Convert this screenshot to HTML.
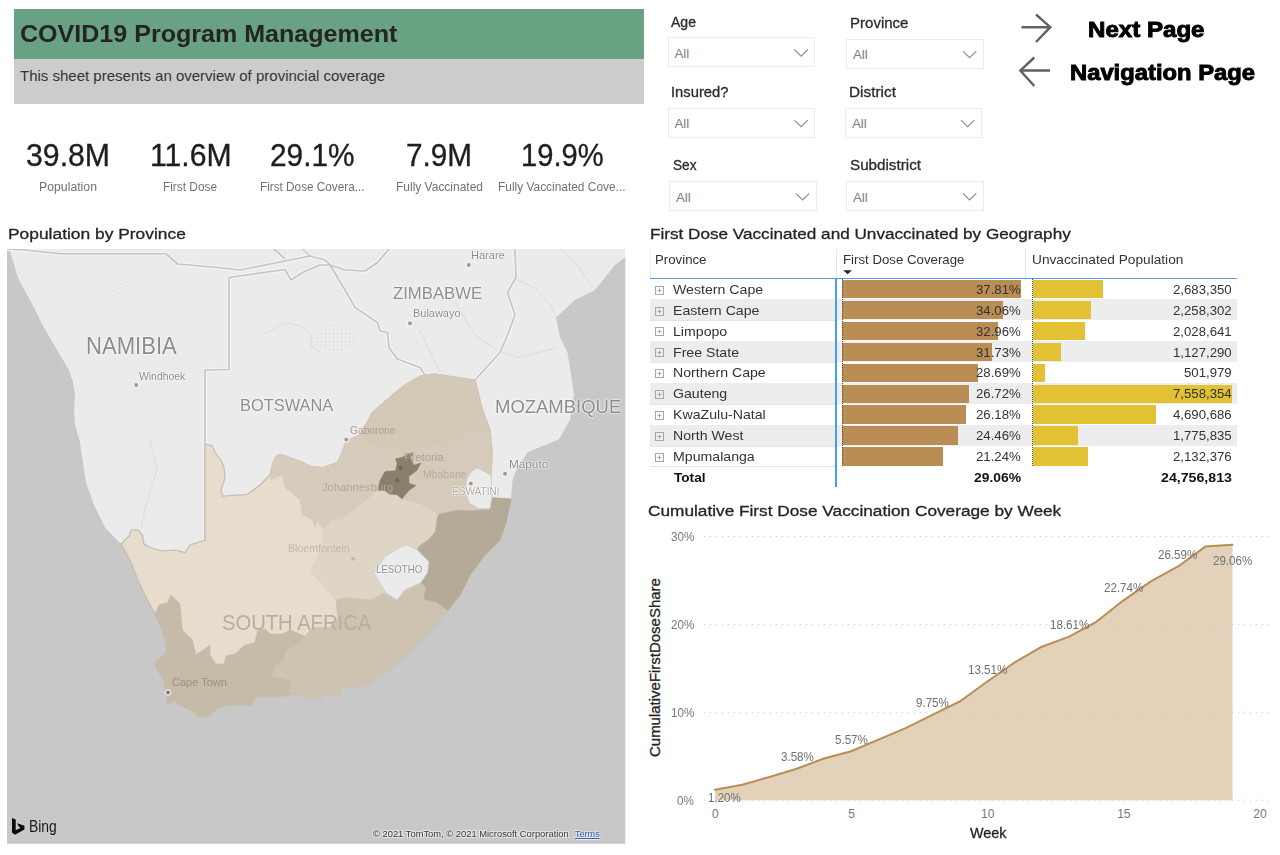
<!DOCTYPE html>
<html><head><meta charset="utf-8"><title>COVID19 Program Management</title>
<style>
html,body{margin:0;padding:0;background:#fff;}
body{width:1280px;height:855px;position:relative;overflow:hidden;font-family:"Liberation Sans",sans-serif;}
.t{position:absolute;white-space:nowrap;line-height:1;display:block;transform-origin:0 0;}
.r{position:absolute;}
svg{position:absolute;left:0;top:0;}
.halo{text-shadow:0 0 2px #fff,0 0 2px #fff,0 0 1px #fff;}
</style></head><body>

<div class="r" style="left:14px;top:9px;width:630px;height:50px;background:#68a283;"></div>
<div class="r" style="left:14px;top:59px;width:630px;height:45.4px;background:#cccccc;"></div>
<span class="t " style="left:20.00px;top:21.60px;font-size:24.6px;color:#252423;font-weight:700;transform:scaleX(1.0190);">COVID19 Program Management</span>
<span class="t " style="left:20.00px;top:68.40px;font-size:15px;color:#333;">This sheet presents an overview of provincial coverage</span>
<span class="t " style="left:26.15px;top:140.30px;font-size:31.2px;color:#1f1e1d;transform:scaleX(0.9698);-webkit-text-stroke:0.35px #1f1e1d;">39.8M</span>
<span class="t " style="left:39.00px;top:181.40px;font-size:12px;color:#727272;transform:scaleX(1.0227);">Population</span>
<span class="t " style="left:149.70px;top:140.30px;font-size:31.2px;color:#1f1e1d;transform:scaleX(0.9668);-webkit-text-stroke:0.35px #1f1e1d;">11.6M</span>
<span class="t " style="left:163.00px;top:181.40px;font-size:12px;color:#727272;transform:scaleX(0.9877);">First Dose</span>
<span class="t " style="left:269.70px;top:140.30px;font-size:31.2px;color:#1f1e1d;transform:scaleX(0.9563);-webkit-text-stroke:0.35px #1f1e1d;">29.1%</span>
<span class="t " style="left:259.95px;top:181.40px;font-size:12px;color:#727272;transform:scaleX(0.9794);">First Dose Covera...</span>
<span class="t " style="left:406.15px;top:140.30px;font-size:31.2px;color:#1f1e1d;transform:scaleX(0.9529);-webkit-text-stroke:0.35px #1f1e1d;">7.9M</span>
<span class="t " style="left:395.50px;top:181.40px;font-size:12px;color:#727272;transform:scaleX(0.9982);">Fully Vaccinated</span>
<span class="t " style="left:521.20px;top:140.30px;font-size:31.2px;color:#1f1e1d;transform:scaleX(0.9337);-webkit-text-stroke:0.35px #1f1e1d;">19.9%</span>
<span class="t " style="left:498.05px;top:181.40px;font-size:12px;color:#727272;transform:scaleX(0.9922);">Fully Vaccinated Cove...</span>
<span class="t " style="left:671.00px;top:14.95px;font-size:14.9px;color:#2b2b2b;transform:scaleX(0.9429);-webkit-text-stroke:0.3px #2b2b2b;">Age</span>
<div class="r" style="left:667.5px;top:37.2px;width:145.5px;height:28px;border:1px solid #ececec;background:#fff;"></div>
<span class="t " style="left:674.50px;top:47.25px;font-size:13.3px;color:#7d7d7d;">All</span>
<svg width="1280" height="855" style="pointer-events:none"><path d="M794.4,49.50000000000001 L801.1,56.2 L807.8000000000001,49.50000000000001" fill="none" stroke="#8a8a8a" stroke-width="1.1"/></svg>
<span class="t " style="left:671.00px;top:84.95px;font-size:14.9px;color:#2b2b2b;transform:scaleX(0.9916);-webkit-text-stroke:0.3px #2b2b2b;">Insured?</span>
<div class="r" style="left:667.5px;top:107.5px;width:145.5px;height:28.5px;border:1px solid #ececec;background:#fff;"></div>
<span class="t " style="left:674.50px;top:117.25px;font-size:13.3px;color:#7d7d7d;">All</span>
<svg width="1280" height="855" style="pointer-events:none"><path d="M794.4,120.05 L801.1,126.75 L807.8000000000001,120.05" fill="none" stroke="#8a8a8a" stroke-width="1.1"/></svg>
<span class="t " style="left:673.00px;top:157.95px;font-size:14.9px;color:#2b2b2b;transform:scaleX(0.9153);-webkit-text-stroke:0.3px #2b2b2b;">Sex</span>
<div class="r" style="left:669px;top:181px;width:145.5px;height:28px;border:1px solid #ececec;background:#fff;"></div>
<span class="t " style="left:676.00px;top:191.25px;font-size:13.3px;color:#7d7d7d;">All</span>
<svg width="1280" height="855" style="pointer-events:none"><path d="M795.9,193.29999999999998 L802.6,200.0 L809.3000000000001,193.29999999999998" fill="none" stroke="#8a8a8a" stroke-width="1.1"/></svg>
<span class="t " style="left:849.50px;top:15.95px;font-size:14.9px;color:#2b2b2b;transform:scaleX(1.0091);-webkit-text-stroke:0.3px #2b2b2b;">Province</span>
<div class="r" style="left:846px;top:39px;width:135.5px;height:27.5px;border:1px solid #ececec;background:#fff;"></div>
<span class="t " style="left:853.00px;top:48.25px;font-size:13.3px;color:#7d7d7d;">All</span>
<svg width="1280" height="855" style="pointer-events:none"><path d="M962.9,51.050000000000004 L969.6,57.75 L976.3000000000001,51.050000000000004" fill="none" stroke="#8a8a8a" stroke-width="1.1"/></svg>
<span class="t " style="left:849.00px;top:84.95px;font-size:14.9px;color:#2b2b2b;transform:scaleX(1.0324);-webkit-text-stroke:0.3px #2b2b2b;">District</span>
<div class="r" style="left:845px;top:107.5px;width:134.5px;height:28.5px;border:1px solid #ececec;background:#fff;"></div>
<span class="t " style="left:852.00px;top:117.25px;font-size:13.3px;color:#7d7d7d;">All</span>
<svg width="1280" height="855" style="pointer-events:none"><path d="M960.9,120.05 L967.6,126.75 L974.3000000000001,120.05" fill="none" stroke="#8a8a8a" stroke-width="1.1"/></svg>
<span class="t " style="left:850.00px;top:157.95px;font-size:14.9px;color:#2b2b2b;transform:scaleX(1.0207);-webkit-text-stroke:0.3px #2b2b2b;">Subdistrict</span>
<div class="r" style="left:846px;top:181px;width:135.5px;height:28px;border:1px solid #ececec;background:#fff;"></div>
<span class="t " style="left:853.00px;top:191.25px;font-size:13.3px;color:#7d7d7d;">All</span>
<svg width="1280" height="855" style="pointer-events:none"><path d="M962.9,193.29999999999998 L969.6,200.0 L976.3000000000001,193.29999999999998" fill="none" stroke="#8a8a8a" stroke-width="1.1"/></svg>
<svg width="1280" height="855"><g fill="none" stroke="#646260" stroke-width="2.4" stroke-linecap="butt" stroke-linejoin="miter">
<path d="M1021.5,27.2 H1050 M1036,14.5 L1050.3,27.2 L1036,42"/>
<path d="M1050,70.5 H1021 M1034.3,57.5 L1020.3,70.5 L1034.3,86"/>
</g></svg>
<span class="t " style="left:1087.50px;top:19.65px;font-size:21.5px;color:#000;font-weight:700;transform:scaleX(1.1206);-webkit-text-stroke:0.9px #000;">Next Page</span>
<span class="t " style="left:1070.00px;top:62.65px;font-size:21.5px;color:#000;font-weight:700;transform:scaleX(1.1060);-webkit-text-stroke:0.9px #000;">Navigation Page</span>
<span class="t " style="left:7.80px;top:226.20px;font-size:15.4px;color:#252423;transform:scaleX(1.1300);-webkit-text-stroke:0.3px #252423;">Population by Province</span>
<svg width="1280" height="855" viewBox="0 0 1280 855"><defs><clipPath id="mc"><rect x="7" y="249" width="618.5" height="594.75"/></clipPath><filter id="bl" x="-5%" y="-5%" width="110%" height="110%"><feGaussianBlur stdDeviation="0.6"/></filter></defs>
<g clip-path="url(#mc)"><rect x="7" y="249" width="618.5" height="594.75" fill="#ebebeb"/>
<g filter="url(#bl)">
<polygon points="7,249 9.5,249 12,258 15,268 18,278 25,291 34,307.5 42,324 50,338 60,355 69,370 73,382.5 75,395 74,410 75,425 79.5,440 82.5,460 86,482.5 94,505 105,527.5 121,544 130,560 140,585 147.5,600 155,614 162.5,630 165,640 166.5,650 164,656 157,660 155.5,664 158,671 164,680 166,692.5 167.5,704 175,700 180,705 191,710 197.5,716 206,717.5 216,709 227.5,705 250,705 257.5,696 285,696 292.5,694 320,700 324,695 340,694 342,688 347,686 358,687.4 372,681 386,671 397.5,662.8 408.6,653 419.8,641.8 428.2,631.9 436.7,623.5 447.9,610.2 460,595 470,575 485,555 500,540 506,522.5 511,499 512.5,480 517.5,467.5 527.5,452.5 532.5,450 557.5,440 560,437.5 570,420 574,395 571,375 567.5,352.5 560,337.5 556,317.5 575,300 595,290 615,265 625.5,257 625.5,845.75 7,845.75" fill="#c8c8c8"/>
<polyline points="205,540 205,370 229,369.5 229,277.5 285,269.5 291,280 302.5,272.5 320,265 330,265" fill="none" stroke="#f3f3f3" stroke-width="4" stroke-linejoin="round"/>
<polyline points="7,249 25,250 60,253.75 166,253.75 177.5,264 217.5,267.5 240,270 310,256 325,260 330,265" fill="none" stroke="#f3f3f3" stroke-width="4" stroke-linejoin="round"/>
<polyline points="273.75,249 285,258.75" fill="none" stroke="#f3f3f3" stroke-width="4" stroke-linejoin="round"/>
<polyline points="302.5,249 310,256" fill="none" stroke="#f3f3f3" stroke-width="4" stroke-linejoin="round"/>
<polyline points="330,265 345,270 365,271 377.5,262.5 389,249" fill="none" stroke="#f3f3f3" stroke-width="4" stroke-linejoin="round"/>
<polyline points="330,265 345,290 355,307.5 377.5,322.5 380,331 387.5,332.5 389,347.5 397.5,359 420,367.5 425,375 435,374" fill="none" stroke="#f3f3f3" stroke-width="4" stroke-linejoin="round"/>
<polyline points="515,249 516,277.5 507.5,292.5 515,315 507.5,335 500,352.5 475,380" fill="none" stroke="#f3f3f3" stroke-width="4" stroke-linejoin="round"/>
<polyline points="205,540 205,370 229,369.5 229,277.5 285,269.5 291,280 302.5,272.5 320,265 330,265" fill="none" stroke="#c5c5c5" stroke-width="1.7" stroke-linejoin="round"/>
<polyline points="7,249 25,250 60,253.75 166,253.75 177.5,264 217.5,267.5 240,270 310,256 325,260 330,265" fill="none" stroke="#c5c5c5" stroke-width="1.7" stroke-linejoin="round"/>
<polyline points="273.75,249 285,258.75" fill="none" stroke="#c5c5c5" stroke-width="1.7" stroke-linejoin="round"/>
<polyline points="302.5,249 310,256" fill="none" stroke="#c5c5c5" stroke-width="1.7" stroke-linejoin="round"/>
<polyline points="330,265 345,270 365,271 377.5,262.5 389,249" fill="none" stroke="#c5c5c5" stroke-width="1.7" stroke-linejoin="round"/>
<polyline points="330,265 345,290 355,307.5 377.5,322.5 380,331 387.5,332.5 389,347.5 397.5,359 420,367.5 425,375 435,374" fill="none" stroke="#c5c5c5" stroke-width="1.7" stroke-linejoin="round"/>
<polyline points="515,249 516,277.5 507.5,292.5 515,315 507.5,335 500,352.5 475,380" fill="none" stroke="#c5c5c5" stroke-width="1.7" stroke-linejoin="round"/>
<polyline points="500,352.5 520,357.5 557.5,347.5" fill="none" stroke="#dcdcdc" stroke-width="1" stroke-linejoin="round"/>
<polyline points="560,249 575,262 592.5,287.5" fill="none" stroke="#dcdcdc" stroke-width="1" stroke-linejoin="round"/>
<polyline points="150,440 157,470 146,505 141,528" fill="none" stroke="#dcdcdc" stroke-width="1" stroke-linejoin="round"/>
<polyline points="420,330 432,355 440,372" fill="none" stroke="#dcdcdc" stroke-width="1" stroke-linejoin="round"/>
<polyline points="455,302 475,335 497,350" fill="none" stroke="#dcdcdc" stroke-width="1" stroke-linejoin="round"/>
<polyline points="516,279 536,289 551,306 556,317" fill="none" stroke="#dcdcdc" stroke-width="1" stroke-linejoin="round"/>
<polyline points="265.5,334 284,323 301,325.6 311,335.7 311,345.8 321,352.5" fill="none" stroke="#dcdcdc" stroke-width="1" stroke-linejoin="round"/>
<defs><pattern id="dots" width="4" height="4" patternUnits="userSpaceOnUse"><rect x="1" y="1" width="1" height="1" fill="#cfcfcf"/></pattern></defs>
<ellipse cx="334" cy="338" rx="21" ry="13" fill="url(#dots)"/>
<ellipse cx="116" cy="288" rx="14" ry="6" fill="url(#dots)" transform="rotate(-20 116 288)"/>
<polygon points="121,544 129,536 131,530 137.5,529.5 142.5,535 144,544 150,547.5 162.5,551 175,550 185,552.5 190,545 205,540 205,444 212.5,446 215,452.5 221,460 224,467.5 225,478 221,490 222.5,496 247,494.5 260,485 265,480 270,475 272.5,465 274,460 277.5,455 282.5,455 290,457.5 300,461 310,466 322.5,467.5 337.5,462.5 344,447.5 346,441 360,435 372.5,412.5 392.5,395 405,385 420,376 435,374 475,380 482.5,410 490,430 492.5,454 491,475 491,499 511,499 506,522.5 500,540 485,555 470,575 460,595 447.9,610.2 436.7,623.5 428.2,631.9 419.8,641.8 408.6,653 397.5,662.8 386,671 372,681 358,687.4 347,686 342,688 340,694 324,695 320,700 292.5,694 285,696 257.5,696 250,705 227.5,705 216,709 206,717.5 197.5,716 191,710 180,705 175,700 167.5,704 166,692.5 164,680 158,671 155.5,664 157,660 164,656 166.5,650 165,640 162.5,630 155,614 147.5,600 140,585 130,560" fill="#e8dccd" stroke="#c4bcb0" stroke-width="1.2"/>
<polygon points="322.5,529 332.5,519 340,520 348.4,514.4 358.3,506 378,490.5 385,490.5 389.2,494 397,494.7 401.9,498.9 418.8,503.1 430,508.8 438.5,514.4 437,520 435.6,531.3 430,538.3 418.8,546.7 417.5,549 407.5,545 400,547.5 385,556.5 374,573 386,593 382.5,594 370,600 345,597.5 336,600 322.5,585 310,571 317.5,557.5 322.5,542.5" fill="#dfd5c5" stroke="#dfd5c5" stroke-width="0.6"/>
<polygon points="272.5,465 274,460 277.5,455 282.5,455 290,457.5 300,461 310,466 322.5,467.5 337.5,462.5 344,447.5 346,441 360,435 372.3,444.1 382.2,448.3 396.3,449 401.9,452.5 401.9,457.4 395.6,458.8 397,463.8 395.6,470.8 385,471.5 380.1,480.6 378,490.5 358.3,506 348.4,514.4 340,520 332.5,519 322.5,529 317.5,520 315,527.5 312.5,520 302.5,515 300,500 285,487.5 282.5,475 270,480" fill="#d7ccbb" stroke="#d7ccbb" stroke-width="0.6"/>
<polygon points="360,435 372.5,412.5 392.5,395 405,385 420,376 435,374 475,380 482.5,410 490,430 480.6,430 470.8,434.2 462.4,434.2 456.7,439.8 438.5,444.1 424.4,446.9 413.1,447.6 413.1,453 401.9,458 401.9,452.5 396.3,449 382.2,448.3 372.3,444.1" fill="#d4c8b7" stroke="#d4c8b7" stroke-width="0.6"/>
<polygon points="490,430 492.5,454 491,475 491.9,497.5 489.8,508.8 472.2,510.9 458.1,510.2 438.5,514.4 430,508.8 418.8,503.1 401.9,498.9 408.9,490.5 415.9,485.6 408.9,483.4 408.9,476.4 416.6,470.8 420.9,463.1 413.8,465.2 410.3,458.1 413.1,452.5 413.1,447.6 424.4,446.9 438.5,444.1 456.7,439.8 462.4,434.2 470.8,434.2 480.6,430" fill="#d6cbba" stroke="#d6cbba" stroke-width="0.6"/>
<polygon points="305,636 312.5,627.5 330,627.5 337.5,617.5 336,600 345,597.5 370,600 382.5,594 386,593 397,600 405,590 421,582.5 426,587.5 424,599 437.5,602.5 447.9,610.2 436.7,623.5 428.2,631.9 419.8,641.8 408.6,653 397.5,662.8 386,671 372,681 358,687.4 347,686 342,688 340,694 324,695 320,700 292.5,694 287.5,692.5 291,685 287.5,680 271,676 275,666 284,660 285,650 297.5,645" fill="#cec2b1" stroke="#cec2b1" stroke-width="0.6"/>
<polygon points="155,614 159,605 167.5,602.5 171,595 180,604 182.5,630 192.5,640 196,655 210,645 210,655 216,664 224,664 226,656 235,654 245,645 255,642.5 257.5,631 265,629 270,634 282.5,634 290,630 305,636 297.5,645 285,650 284,660 275,666 271,676 287.5,680 291,685 287.5,692.5 292.5,694 285,696 257.5,696 250,705 227.5,705 216,709 206,717.5 197.5,716 191,710 180,705 175,700 167.5,704 166,692.5 164,680 158,671 155.5,664 157,660 164,656 166.5,650 165,640 162.5,630 155,614" fill="#c6baa9" stroke="#c6baa9" stroke-width="0.6"/>
<polygon points="491.9,497.5 511,499 506,522.5 500,540 485,555 470,575 460,595 447.9,610.2 437.5,602.5 424,599 426,587.5 421,582.5 427.5,572.5 429,562 417.5,550 418.8,546.7 430,538.3 435.6,531.3 437,520 438.5,514.4 458.1,510.2 472.2,510.9 489.8,508.8" fill="#b5aa98" stroke="#b5aa98" stroke-width="0.6"/>
<polygon points="395.6,458.8 401.9,457.4 413.1,452.5 410.3,458.1 413.8,465.2 420.9,463.1 416.6,470.8 408.9,476.4 408.9,483.4 415.9,485.6 408.9,490.5 401.9,498.9 397,494.7 389.2,494 385,490.5 378,490.5 380.1,480.6 385,471.5 395.6,470.8 397,463.8" fill="#8c7e6c" stroke="#8c7e6c" stroke-width="0.6"/>
<polygon points="407.5,545 417.5,550 429,562 427.5,572.5 421,582.5 405,590 397,600 386,593 374,573 385,556.5 400,547.5" fill="#ebebeb" stroke="#cfcfcf" stroke-width="1"/>
<polygon points="477.1,468 491.2,475 491.9,497.5 489.8,508.8 479.2,508.8 469.4,503.1 465.2,491.9 466.6,479.2 472.2,470.8" fill="#ebebeb" stroke="#cfcfcf" stroke-width="1"/>
</g>
<circle cx="136.25" cy="385" r="3.2" fill="#f6f6f6" opacity="0.85"/>
<circle cx="136.25" cy="385" r="2" fill="#9c9c9c"/>
<circle cx="468.75" cy="265" r="3.2" fill="#f6f6f6" opacity="0.85"/>
<circle cx="468.75" cy="265" r="2" fill="#9c9c9c"/>
<circle cx="410" cy="323.25" r="3.2" fill="#f6f6f6" opacity="0.85"/>
<circle cx="410" cy="323.25" r="2" fill="#9c9c9c"/>
<circle cx="346.25" cy="439.5" r="3.2" fill="#f6f6f6" opacity="0.85"/>
<circle cx="346.25" cy="439.5" r="2" fill="#9c9c9c"/>
<circle cx="505" cy="473.75" r="3.2" fill="#f6f6f6" opacity="0.85"/>
<circle cx="505" cy="473.75" r="2" fill="#9c9c9c"/>
<circle cx="400.5" cy="467.7" r="2" fill="#6f6254"/>
<circle cx="397.4" cy="480.4" r="2" fill="#6f6254"/>
<circle cx="470.8" cy="483.4" r="3.2" fill="#f6f6f6" opacity="0.85"/>
<circle cx="470.8" cy="483.4" r="2" fill="#9c9c9c"/>
<circle cx="353.25" cy="558.75" r="2" fill="#c4baab"/>
<circle cx="168" cy="692.5" r="3.2" fill="#f6f6f6" opacity="0.85"/>
<circle cx="168" cy="692.5" r="2" fill="#857c6f"/>
</g></svg>
<span class="t halo" style="left:85.80px;top:334.80px;font-size:23.2px;color:#8c8c8c;transform:scaleX(0.9518);">NAMIBIA</span>
<span class="t halo" style="left:240.00px;top:397.40px;font-size:17px;color:#8c8c8c;transform:scaleX(0.9642);">BOTSWANA</span>
<span class="t halo" style="left:393.30px;top:284.70px;font-size:17.4px;color:#8c8c8c;transform:scaleX(0.9611);">ZIMBABWE</span>
<span class="t halo" style="left:495.00px;top:398.40px;font-size:18px;color:#8c8c8c;transform:scaleX(1.0260);">MOZAMBIQUE</span>
<span class="t " style="left:222.00px;top:612.00px;font-size:21.8px;color:#b9afa0;transform:scaleX(0.9261);">SOUTH AFRICA</span>
<span class="t halo" style="left:138.80px;top:371.15px;font-size:10.5px;color:#8a8a8a;transform:scaleX(0.9895);">Windhoek</span>
<span class="t halo" style="left:470.80px;top:250.15px;font-size:10.5px;color:#8a8a8a;transform:scaleX(1.0500);">Harare</span>
<span class="t halo" style="left:412.50px;top:308.15px;font-size:10.5px;color:#8a8a8a;transform:scaleX(1.0433);">Bulawayo</span>
<span class="t " style="left:349.50px;top:425.15px;font-size:10.5px;color:#a8a195;transform:scaleX(0.9742);">Gaborone</span>
<span class="t halo" style="left:508.80px;top:459.00px;font-size:10.8px;color:#8a8a8a;transform:scaleX(1.0882);">Maputo</span>
<span class="t " style="left:404.40px;top:451.80px;font-size:11.2px;color:#ab9f90;transform:scaleX(1.0072);">Pretoria</span>
<span class="t " style="left:423.00px;top:469.00px;font-size:10.8px;color:#b7ad9f;transform:scaleX(0.9659);">Mbabane</span>
<span class="t " style="left:322.00px;top:481.65px;font-size:11.5px;color:#b0a697;transform:scaleX(0.9768);">Johannesburg</span>
<span class="t halo" style="left:451.80px;top:486.00px;font-size:10.8px;color:#b0aaa0;transform:scaleX(0.9314);">ESWATINI</span>
<span class="t halo" style="left:375.50px;top:564.00px;font-size:10.8px;color:#8f8f8f;transform:scaleX(0.8951);">LESOTHO</span>
<span class="t " style="left:287.50px;top:543.00px;font-size:10.8px;color:#c2b8a9;transform:scaleX(0.9787);">Bloemfontein</span>
<span class="t " style="left:172.00px;top:676.80px;font-size:11.2px;color:#9a9082;transform:scaleX(0.9851);">Cape Town</span>
<svg width="1280" height="855"><path d="M12,817.9 L15.7,819.5 L15.7,830.3 L20.4,827.9 L18.5,826.1 L17.1,823.3 L24.4,825.8 L24.4,829.6 L15,834.7 L12,832.6 Z" fill="#0a0a0a"/></svg>
<span class="t " style="left:29.20px;top:818.90px;font-size:16px;color:#1a1a1a;transform:scaleX(0.8681);">Bing</span>
<span class="t " style="left:372.80px;top:829.80px;font-size:9.2px;color:#3a3a3a;transform:scaleX(1.0189);text-shadow:1px 1px 0 #e8e8e8,-1px -1px 0 #e8e8e8,1px -1px 0 #e8e8e8,-1px 1px 0 #e8e8e8;">© 2021 TomTom, © 2021 Microsoft Corporation</span>
<span class="t " style="left:575.00px;top:829.80px;font-size:9.2px;color:#3a5fc4;transform:scaleX(0.9862);text-decoration:underline;text-shadow:1px 1px 0 #e8e8e8,-1px -1px 0 #e8e8e8;">Terms</span>
<span class="t " style="left:649.60px;top:226.20px;font-size:15.4px;color:#252423;transform:scaleX(1.1135);-webkit-text-stroke:0.3px #252423;">First Dose Vaccinated and Unvaccinated by Geography</span>
<div class="r" style="left:835.5px;top:249px;width:1px;height:29px;background:#dfe9f5;"></div>
<div class="r" style="left:1025.0px;top:249px;width:1px;height:29px;background:#dfe9f5;"></div>
<div class="r" style="left:649.5px;top:249px;width:1px;height:29px;background:#e6eef8;"></div>
<span class="t " style="left:655.00px;top:253.20px;font-size:13.4px;color:#333;transform:scaleX(0.9878);">Province</span>
<span class="t " style="left:842.50px;top:253.20px;font-size:13.4px;color:#333;transform:scaleX(0.9888);">First Dose Coverage</span>
<span class="t " style="left:1032.00px;top:253.20px;font-size:13.4px;color:#333;transform:scaleX(1.0219);">Unvaccinated Population</span>
<svg width="1280" height="855"><path d="M843.2,270.2 H852 L847.6,274.2 Z" fill="#252423"/></svg>
<div class="r" style="left:649.5px;top:298.94px;width:186.5px;height:1px;background:#d7e6f7;"></div>
<div class="r" style="left:842px;top:279.8px;width:179.0px;height:18.7px;background:#b98d53;"></div>
<div class="r" style="left:1032.5px;top:279.8px;width:70.0px;height:18.7px;background:#e2c234;"></div>
<svg width="1280" height="855"><g fill="none" stroke="#a6a6a6" stroke-width="1"><rect x="655.5" y="286.5" width="8" height="8"/><path d="M657.5,290.5 H661.5 M659.5,288.5 V292.5"/></g></svg>
<span class="t " style="left:673.40px;top:283.10px;font-size:13.6px;color:#333;transform:scaleX(1.0400);">Western Cape</span>
<span class="t " style="left:975.73px;top:283.20px;font-size:13.4px;color:#333;transform:scaleX(0.9850);">37.81%</span>
<span class="t " style="left:1173.28px;top:283.20px;font-size:13.4px;color:#333;transform:scaleX(0.9850);">2,683,350</span>
<div class="r" style="left:649.5px;top:299px;width:587.5px;height:21px;background:#ededed;"></div>
<div class="r" style="left:649.5px;top:319.88px;width:186.5px;height:1px;background:#d7e6f7;"></div>
<div class="r" style="left:842px;top:300.74px;width:161.2px;height:18.7px;background:#b98d53;"></div>
<div class="r" style="left:1032.5px;top:300.74px;width:58.7px;height:18.7px;background:#e2c234;"></div>
<svg width="1280" height="855"><g fill="none" stroke="#a6a6a6" stroke-width="1"><rect x="655.5" y="307.5" width="8" height="8"/><path d="M657.5,311.5 H661.5 M659.5,309.5 V313.5"/></g></svg>
<span class="t " style="left:673.40px;top:304.10px;font-size:13.6px;color:#333;transform:scaleX(1.0400);">Eastern Cape</span>
<span class="t " style="left:975.73px;top:304.20px;font-size:13.4px;color:#333;transform:scaleX(0.9850);">34.06%</span>
<span class="t " style="left:1173.28px;top:304.20px;font-size:13.4px;color:#333;transform:scaleX(0.9850);">2,258,302</span>
<div class="r" style="left:649.5px;top:340.82px;width:186.5px;height:1px;background:#d7e6f7;"></div>
<div class="r" style="left:842px;top:321.68px;width:156.0px;height:18.7px;background:#b98d53;"></div>
<div class="r" style="left:1032.5px;top:321.68px;width:52.6px;height:18.7px;background:#e2c234;"></div>
<svg width="1280" height="855"><g fill="none" stroke="#a6a6a6" stroke-width="1"><rect x="655.5" y="327.5" width="8" height="8"/><path d="M657.5,331.5 H661.5 M659.5,329.5 V333.5"/></g></svg>
<span class="t " style="left:673.40px;top:325.10px;font-size:13.6px;color:#333;transform:scaleX(1.0400);">Limpopo</span>
<span class="t " style="left:975.73px;top:325.20px;font-size:13.4px;color:#333;transform:scaleX(0.9850);">32.96%</span>
<span class="t " style="left:1173.28px;top:325.20px;font-size:13.4px;color:#333;transform:scaleX(0.9850);">2,028,641</span>
<div class="r" style="left:649.5px;top:341px;width:587.5px;height:21px;background:#ededed;"></div>
<div class="r" style="left:649.5px;top:361.76px;width:186.5px;height:1px;background:#d7e6f7;"></div>
<div class="r" style="left:842px;top:342.62px;width:150.2px;height:18.7px;background:#b98d53;"></div>
<div class="r" style="left:1032.5px;top:342.62px;width:28.6px;height:18.7px;background:#e2c234;"></div>
<svg width="1280" height="855"><g fill="none" stroke="#a6a6a6" stroke-width="1"><rect x="655.5" y="348.5" width="8" height="8"/><path d="M657.5,352.5 H661.5 M659.5,350.5 V354.5"/></g></svg>
<span class="t " style="left:673.40px;top:346.10px;font-size:13.6px;color:#333;transform:scaleX(1.0400);">Free State</span>
<span class="t " style="left:975.73px;top:346.20px;font-size:13.4px;color:#333;transform:scaleX(0.9850);">31.73%</span>
<span class="t " style="left:1173.28px;top:346.20px;font-size:13.4px;color:#333;transform:scaleX(0.9850);">1,127,290</span>
<div class="r" style="left:649.5px;top:382.7px;width:186.5px;height:1px;background:#d7e6f7;"></div>
<div class="r" style="left:842px;top:363.56px;width:135.8px;height:18.7px;background:#b98d53;"></div>
<div class="r" style="left:1032.5px;top:363.56px;width:12.0px;height:18.7px;background:#e2c234;"></div>
<svg width="1280" height="855"><g fill="none" stroke="#a6a6a6" stroke-width="1"><rect x="655.5" y="369.5" width="8" height="8"/><path d="M657.5,373.5 H661.5 M659.5,371.5 V375.5"/></g></svg>
<span class="t " style="left:673.40px;top:366.10px;font-size:13.6px;color:#333;transform:scaleX(1.0400);">Northern Cape</span>
<span class="t " style="left:975.73px;top:366.20px;font-size:13.4px;color:#333;transform:scaleX(0.9850);">28.69%</span>
<span class="t " style="left:1184.29px;top:366.20px;font-size:13.4px;color:#333;transform:scaleX(0.9850);">501,979</span>
<div class="r" style="left:649.5px;top:383px;width:587.5px;height:21px;background:#ededed;"></div>
<div class="r" style="left:649.5px;top:403.64px;width:186.5px;height:1px;background:#d7e6f7;"></div>
<div class="r" style="left:842px;top:384.5px;width:126.5px;height:18.7px;background:#b98d53;"></div>
<div class="r" style="left:1032.5px;top:384.5px;width:199.5px;height:18.7px;background:#e2c234;"></div>
<svg width="1280" height="855"><g fill="none" stroke="#a6a6a6" stroke-width="1"><rect x="655.5" y="390.5" width="8" height="8"/><path d="M657.5,394.5 H661.5 M659.5,392.5 V396.5"/></g></svg>
<span class="t " style="left:673.40px;top:387.10px;font-size:13.6px;color:#333;transform:scaleX(1.0400);">Gauteng</span>
<span class="t " style="left:975.73px;top:387.20px;font-size:13.4px;color:#333;transform:scaleX(0.9850);">26.72%</span>
<span class="t " style="left:1173.28px;top:387.20px;font-size:13.4px;color:#333;transform:scaleX(0.9850);">7,558,354</span>
<div class="r" style="left:649.5px;top:424.58px;width:186.5px;height:1px;background:#d7e6f7;"></div>
<div class="r" style="left:842px;top:405.44px;width:123.9px;height:18.7px;background:#b98d53;"></div>
<div class="r" style="left:1032.5px;top:405.44px;width:123.3px;height:18.7px;background:#e2c234;"></div>
<svg width="1280" height="855"><g fill="none" stroke="#a6a6a6" stroke-width="1"><rect x="655.5" y="411.5" width="8" height="8"/><path d="M657.5,415.5 H661.5 M659.5,413.5 V417.5"/></g></svg>
<span class="t " style="left:673.40px;top:408.10px;font-size:13.6px;color:#333;transform:scaleX(1.0400);">KwaZulu-Natal</span>
<span class="t " style="left:975.73px;top:408.20px;font-size:13.4px;color:#333;transform:scaleX(0.9850);">26.18%</span>
<span class="t " style="left:1173.28px;top:408.20px;font-size:13.4px;color:#333;transform:scaleX(0.9850);">4,690,686</span>
<div class="r" style="left:649.5px;top:425px;width:587.5px;height:21px;background:#ededed;"></div>
<div class="r" style="left:649.5px;top:445.52000000000004px;width:186.5px;height:1px;background:#d7e6f7;"></div>
<div class="r" style="left:842px;top:426.38000000000005px;width:115.8px;height:18.7px;background:#b98d53;"></div>
<div class="r" style="left:1032.5px;top:426.38000000000005px;width:45.8px;height:18.7px;background:#e2c234;"></div>
<svg width="1280" height="855"><g fill="none" stroke="#a6a6a6" stroke-width="1"><rect x="655.5" y="432.5" width="8" height="8"/><path d="M657.5,436.5 H661.5 M659.5,434.5 V438.5"/></g></svg>
<span class="t " style="left:673.40px;top:429.10px;font-size:13.6px;color:#333;transform:scaleX(1.0400);">North West</span>
<span class="t " style="left:975.73px;top:429.20px;font-size:13.4px;color:#333;transform:scaleX(0.9850);">24.46%</span>
<span class="t " style="left:1173.28px;top:429.20px;font-size:13.4px;color:#333;transform:scaleX(0.9850);">1,775,835</span>
<div class="r" style="left:649.5px;top:466.46px;width:186.5px;height:1px;background:#d7e6f7;"></div>
<div class="r" style="left:842px;top:447.32px;width:100.6px;height:18.7px;background:#b98d53;"></div>
<div class="r" style="left:1032.5px;top:447.32px;width:55.3px;height:18.7px;background:#e2c234;"></div>
<svg width="1280" height="855"><g fill="none" stroke="#a6a6a6" stroke-width="1"><rect x="655.5" y="453.5" width="8" height="8"/><path d="M657.5,457.5 H661.5 M659.5,455.5 V459.5"/></g></svg>
<span class="t " style="left:673.40px;top:450.10px;font-size:13.6px;color:#333;transform:scaleX(1.0400);">Mpumalanga</span>
<span class="t " style="left:975.73px;top:450.20px;font-size:13.4px;color:#333;transform:scaleX(0.9850);">21.24%</span>
<span class="t " style="left:1173.28px;top:450.20px;font-size:13.4px;color:#333;transform:scaleX(0.9850);">2,132,376</span>
<svg width="1280" height="855"><path d="M842.5,279 V466.46000000000004 M1032.5,279 V466.46000000000004" stroke="#4a4a4a" stroke-width="1" stroke-dasharray="1,1" fill="none" shape-rendering="crispEdges"/></svg>
<span class="t " style="left:673.80px;top:471.20px;font-size:13.4px;color:#111;font-weight:700;transform:scaleX(1.0156);">Total</span>
<span class="t " style="left:973.50px;top:471.20px;font-size:13.4px;color:#111;font-weight:700;transform:scaleX(1.0341);">29.06%</span>
<span class="t " style="left:1161.00px;top:471.20px;font-size:13.4px;color:#111;font-weight:700;transform:scaleX(1.0586);">24,756,813</span>
<div class="r" style="left:649.5px;top:277.5px;width:587.5px;height:1.4px;background:#4a9deb;"></div>
<div class="r" style="left:835.3px;top:278px;width:1.4px;height:209px;background:#4a9deb;"></div>
<span class="t " style="left:648.40px;top:503.20px;font-size:15.4px;color:#252423;transform:scaleX(1.1200);-webkit-text-stroke:0.3px #252423;">Cumulative First Dose Vaccination Coverage by Week</span>
<svg width="1280" height="855">
<polygon points="715.0,789.7 742.24,784.69 769.47,776.95 796.71,768.77 823.95,758.49 851.18,751.28 878.42,739.59 905.66,728.16 932.9,714.53 960.13,701.25 987.37,681.47 1014.61,662.48 1041.84,646.74 1069.08,636.63 1096.32,621.77 1123.55,600.32 1150.79,581.33 1178.03,566.47 1205.27,546.6 1232.5,544.75 1232.5,800.25 715.0,800.25" fill="#e4d1b9"/>
<path d="M704,800.25 H1270" stroke="#c8c8c8" stroke-width="1" stroke-dasharray="1,5" fill="none"/>
<path d="M704,712.33 H1270" stroke="#c8c8c8" stroke-width="1" stroke-dasharray="1,5" fill="none"/>
<path d="M704,624.41 H1270" stroke="#c8c8c8" stroke-width="1" stroke-dasharray="1,5" fill="none"/>
<path d="M704,536.49 H1270" stroke="#c8c8c8" stroke-width="1" stroke-dasharray="1,5" fill="none"/>
<polyline points="715.0,789.7 742.24,784.69 769.47,776.95 796.71,768.77 823.95,758.49 851.18,751.28 878.42,739.59 905.66,728.16 932.9,714.53 960.13,701.25 987.37,681.47 1014.61,662.48 1041.84,646.74 1069.08,636.63 1096.32,621.77 1123.55,600.32 1150.79,581.33 1178.03,566.47 1205.27,546.6 1232.5,544.75" fill="none" stroke="#b98d53" stroke-width="2" stroke-linejoin="round" stroke-linecap="round"/>
</svg>
<span class="t " style="left:676.98px;top:795.40px;font-size:12px;color:#777;transform:scaleX(0.9700);">0%</span>
<span class="t " style="left:670.50px;top:707.40px;font-size:12px;color:#777;transform:scaleX(0.9700);">10%</span>
<span class="t " style="left:670.50px;top:619.40px;font-size:12px;color:#777;transform:scaleX(0.9700);">20%</span>
<span class="t " style="left:670.50px;top:531.40px;font-size:12px;color:#777;transform:scaleX(0.9700);">30%</span>
<span class="t " style="left:711.96px;top:808.40px;font-size:12px;color:#777;">0</span>
<span class="t " style="left:848.15px;top:808.40px;font-size:12px;color:#777;">5</span>
<span class="t " style="left:981.00px;top:808.40px;font-size:12px;color:#777;">10</span>
<span class="t " style="left:1117.18px;top:808.40px;font-size:12px;color:#777;">15</span>
<span class="t " style="left:1253.37px;top:808.40px;font-size:12px;color:#777;">20</span>
<span class="t " style="left:969.75px;top:825.95px;font-size:14.9px;color:#252423;transform:scaleX(0.9651);-webkit-text-stroke:0.3px #252423;">Week</span>
<span class="t" style="left:647.69px;top:757.00px;font-size:14.9px;color:#252423;-webkit-text-stroke:0.3px #252423;transform:rotate(-90deg) scaleX(1.0054);transform-origin:0 0;">CumulativeFirstDoseShare</span>
<span class="t " style="left:707.57px;top:792.30px;font-size:12.2px;color:#707070;transform:scaleX(0.9500);">1.20%</span>
<span class="t " style="left:780.57px;top:751.30px;font-size:12.2px;color:#707070;transform:scaleX(0.9500);">3.58%</span>
<span class="t " style="left:834.87px;top:734.30px;font-size:12.2px;color:#707070;transform:scaleX(0.9500);">5.57%</span>
<span class="t " style="left:916.17px;top:697.30px;font-size:12.2px;color:#707070;transform:scaleX(0.9500);">9.75%</span>
<span class="t " style="left:967.85px;top:664.30px;font-size:12.2px;color:#707070;transform:scaleX(0.9500);">13.51%</span>
<span class="t " style="left:1049.85px;top:619.30px;font-size:12.2px;color:#707070;transform:scaleX(0.9500);">18.61%</span>
<span class="t " style="left:1104.15px;top:582.30px;font-size:12.2px;color:#707070;transform:scaleX(0.9500);">22.74%</span>
<span class="t " style="left:1158.35px;top:549.30px;font-size:12.2px;color:#707070;transform:scaleX(0.9500);">26.59%</span>
<span class="t " style="left:1212.85px;top:555.30px;font-size:12.2px;color:#707070;transform:scaleX(0.9500);">29.06%</span>
</body></html>
